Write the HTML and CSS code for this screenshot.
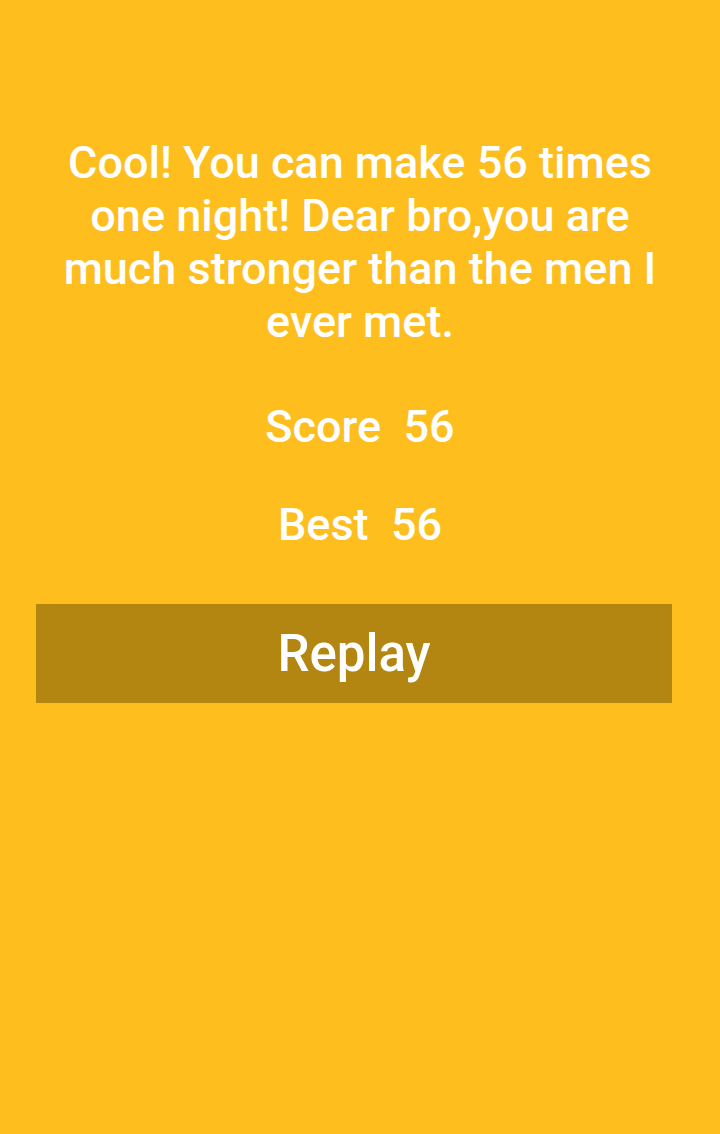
FILE: index.html
```html
<!DOCTYPE html>
<html>
<head>
<meta charset="utf-8">
<link rel="stylesheet" href="styles.css">
</head>
<body>
<main class="screen">
  <p class="message">Cool! You can make 56 times one night! Dear bro,you are much stronger than the men I ever met.</p>
  <p class="stat">Score&nbsp;&nbsp;56</p>
  <p class="stat best">Best&nbsp;&nbsp;56</p>
  <button class="replay">Replay</button>
</main>
</body>
</html>
```
FILE: styles.css
```css
html, body {
  margin: 0;
  padding: 0;
  background: #fdbe1e;
}
.screen {
  width: 720px;
  height: 1134px;
  box-sizing: border-box;
  padding: 136px 36px 0;
  display: flex;
  flex-direction: column;
  align-items: center;
  font-family: Roboto, "Liberation Sans", sans-serif;
  font-weight: 500;
  color: #ffffff;
}
.message {
  margin: 0;
  max-width: 620px;
  font-size: 45px;
  line-height: 53px;
  text-align: center;
}
.stat {
  margin: 52px 0 0;
  font-size: 45px;
  line-height: 53px;
}
.stat.best {
  margin-top: 45px;
}
.replay {
  align-self: flex-start;
  margin-top: 53px;
  width: 636px;
  height: 99px;
  border: none;
  background: #b38612;
  color: #ffffff;
  font-family: Roboto, "Liberation Sans", sans-serif;
  font-weight: 500;
  font-size: 51px;
  padding: 0;
}
```
